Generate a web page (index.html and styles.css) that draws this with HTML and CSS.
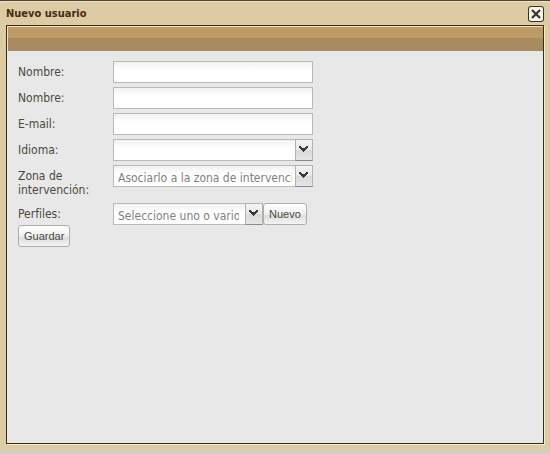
FILE: index.html
```html
<!DOCTYPE html>
<html lang="es">
<head>
<meta charset="utf-8">
<title>Nuevo usuario</title>
<link rel="stylesheet" href="styles.css">
</head>
<body>
<main class="window">
  <header class="titlebar">
    <h1 class="title">Nuevo usuario</h1>
    <button class="close" type="button" aria-label="Cerrar">
      <svg viewBox="0 0 16 16" width="16" height="16" aria-hidden="true"><path d="M4 4L12 12M12 4L4 12" stroke="#3c3420" stroke-width="2.2" fill="none"/></svg>
    </button>
  </header>
  <section class="panel">
    <div class="toolbar"></div>
    <form class="form">
      <div class="row">
        <label class="label" for="nombre">Nombre:</label>
        <input class="field" id="nombre" type="text">
      </div>
      <div class="row">
        <label class="label" for="nombre2">Nombre:</label>
        <input class="field" id="nombre2" type="text">
      </div>
      <div class="row">
        <label class="label" for="email">E-mail:</label>
        <input class="field" id="email" type="text">
      </div>
      <div class="row">
        <label class="label" for="idioma">Idioma:</label>
        <span class="combo">
          <select class="field select" id="idioma"><option></option></select>
          <span class="trigger"><svg viewBox="0 0 9 6" width="9" height="6" aria-hidden="true"><path d="M0 0H2V1H3V2H6V1H7V0H9V2H8V3H7V4H6V5H5V6H4V5H3V4H2V3H1V2H0Z" fill="#3c3830"/></svg></span>
        </span>
      </div>
      <div class="row row-tall">
        <label class="label" for="zona">Zona de intervención:</label>
        <span class="combo">
          <select class="field select" id="zona"><option>Asociarlo a la zona de intervención</option></select>
          <span class="trigger"><svg viewBox="0 0 9 6" width="9" height="6" aria-hidden="true"><path d="M0 0H2V1H3V2H6V1H7V0H9V2H8V3H7V4H6V5H5V6H4V5H3V4H2V3H1V2H0Z" fill="#3c3830"/></svg></span>
        </span>
      </div>
      <div class="row row-last">
        <label class="label" for="perfiles">Perfiles:</label>
        <span class="combo combo-short">
          <select class="field select" id="perfiles"><option>Seleccione uno o varios perfiles</option></select>
          <span class="trigger"><svg viewBox="0 0 9 6" width="9" height="6" aria-hidden="true"><path d="M0 0H2V1H3V2H6V1H7V0H9V2H8V3H7V4H6V5H5V6H4V5H3V4H2V3H1V2H0Z" fill="#3c3830"/></svg></span>
        </span>
        <button class="button" type="button">Nuevo</button>
      </div>
      <button class="button" type="submit">Guardar</button>
    </form>
  </section>
</main>
</body>
</html>
```
FILE: styles.css
```css
* {
  box-sizing: border-box;
}

body {
  margin: 0;
  min-height: 100vh;
  display: flex;
  flex-direction: column;
  background: #cfcfcb;
  border-top: 1px solid #51463c;
  border-bottom: 3px solid #cfcfcb;
  font: 12px/14px "DejaVu Sans Condensed", "DejaVu Sans", sans-serif;
  color: #4c4840;
}

.window {
  flex: 1;
  display: flex;
  flex-direction: column;
  padding: 0 6px 7px;
  background: #dccba3;
  border-top: 1px solid #eee2c4;
  border-radius: 4px 4px 0 0;
}

.titlebar {
  display: flex;
  align-items: center;
  justify-content: space-between;
  height: 23px;
}

.title {
  margin: 0;
  font-size: 11px;
  line-height: 14px;
  font-weight: bold;
  color: #4a2a12;
}

.close {
  width: 16px;
  height: 16px;
  padding: 0;
  border: 0;
  border-radius: 3px;
  background: #f6f4ec;
  box-shadow: inset 0 0 0 1px #3c3420;
}

.close svg {
  display: block;
}

.panel {
  flex: 1;
  border: 1px solid #3a2c1c;
  box-shadow: 1px 1px 0 #f4ead0;
  background: #e8e8e8;
}

.toolbar {
  height: 25px;
  border-top: 1px solid #f0e4c6;
  border-left: 1px solid #f0e4c6;
  background: linear-gradient(#bd9b65 0 11px, #a88c60 11px);
}

.form {
  padding: 10px 11px;
}

.row {
  display: flex;
  align-items: flex-start;
  min-height: 22px;
  margin-bottom: 4px;
}

.row-tall {
  min-height: 34px;
}

.row-last {
  margin-bottom: 0;
}

.label {
  width: 95px;
  padding: 4px 10px 0 0;
}

.field {
  width: 200px;
  height: 22px;
  margin: 0;
  padding: 4px 4px 0;
  border: 1px solid #beb8b3;
  border-radius: 0;
  background: linear-gradient(#eff2f2, #fff 8px);
  font: inherit;
  color: #808080;
}

.combo {
  display: grid;
  grid-template-columns: 1fr 18px;
  width: 200px;
}

.combo-short {
  width: 150px;
}

.select {
  grid-area: 1 / 1 / 2 / 3;
  width: 100%;
  padding-right: 20px;
  appearance: none;
}

.combo-short .select {
  padding-right: 23px;
}

.trigger {
  grid-area: 1 / 2;
  display: flex;
  align-items: center;
  justify-content: center;
  padding: 0 1px 2px 0;
  border: 1px solid #b5b1ac;
  border-bottom-color: #7f8a9a;
  background: linear-gradient(#f4f4f4, #e8e8e8 50%, #d9d9d9 50%, #e6e6e6);
  pointer-events: none;
}

.button {
  height: 22px;
  margin: 0;
  padding: 0 5px;
  border: 1px solid #b0aca7;
  border-radius: 3px;
  background: linear-gradient(#fff, #f0f0f0 50%, #dedede 60%, #f4f4f4);
  font: 11px/14px "Liberation Sans", sans-serif;
  color: #4c4840;
}
```
